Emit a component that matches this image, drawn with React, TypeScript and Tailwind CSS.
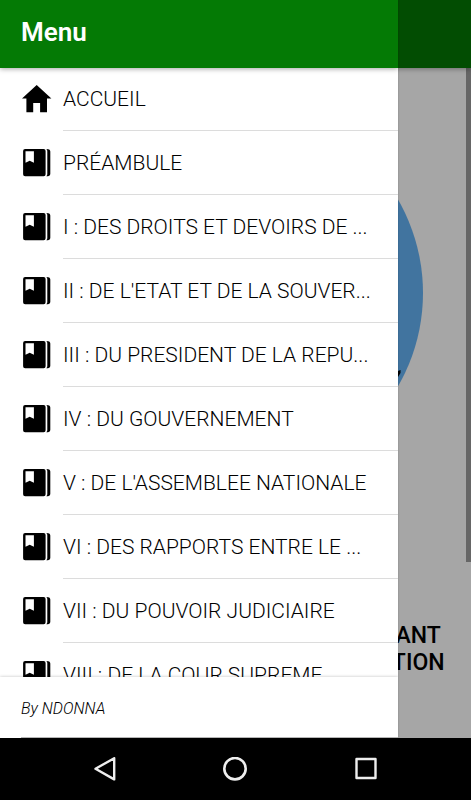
interface MenuItem {
  label: string;
  icon: 'home' | 'book';
}

const MENU_ITEMS: MenuItem[] = [
  { label: 'ACCUEIL', icon: 'home' },
  { label: 'PRÉAMBULE', icon: 'book' },
  { label: 'I : DES DROITS ET DEVOIRS DE ...', icon: 'book' },
  { label: "II : DE L'ETAT ET DE LA SOUVER...", icon: 'book' },
  { label: 'III : DU PRESIDENT DE LA REPU...', icon: 'book' },
  { label: 'IV : DU GOUVERNEMENT', icon: 'book' },
  { label: "V : DE L'ASSEMBLEE NATIONALE", icon: 'book' },
  { label: 'VI : DES RAPPORTS ENTRE LE ...', icon: 'book' },
  { label: 'VII : DU POUVOIR JUDICIAIRE', icon: 'book' },
  { label: 'VIII : DE LA COUR SUPREME', icon: 'book' },
];

function HomeIcon() {
  return (
    <svg className="w-[30px] h-[30px] shrink-0" viewBox="0 0 30 30" fill="currentColor" aria-hidden="true">
      <path d="M11.2 28.3V19h6.9v9.3H25V14.6h4.4L14.7 1 0 14.6h4.4v13.7z" />
    </svg>
  );
}

function BookIcon() {
  return (
    <svg className="w-[30px] h-[30px] shrink-0" viewBox="0 0 30 30" fill="currentColor" aria-hidden="true">
      <path
        fillRule="evenodd"
        d="M3.1 1h18.5a2 2 0 0 1 2 2v23.3a2 2 0 0 1-2 2H3.1a2 2 0 0 1-2-2V3a2 2 0 0 1 2-2zM3.5 3.3v11.5l4.2-2 4.2 2V3.3z"
      />
      <path d="M24.3 1c2.6 0 4 .8 4 2.6v22.1c0 1.800-1.400 2.600-4 2.600.7-.6 1-1.200 1-2V3c0-.8-.3-1.400-1-2z" />
    </svg>
  );
}

function MenuRow({ item }: { item: MenuItem }) {
  return (
    <li>
      <a href="#" className="flex items-center h-16 pl-[22px] gap-[11px]">
        {item.icon === 'home' ? <HomeIcon /> : <BookIcon />}
        <span className="flex-1 min-w-0 h-full flex items-center border-b border-[#dcdcdc] pt-0.5 text-[21px] font-[350] whitespace-nowrap">
          {item.label}
        </span>
      </a>
    </li>
  );
}

function Drawer() {
  return (
    <aside className="absolute inset-y-0 left-0 w-[84.5%] flex flex-col overflow-hidden bg-white shadow-[0_0_2px_rgba(0,0,0,0.2)]">
      <header className="relative z-10 h-17 shrink-0 flex items-center pl-[21px] pb-1 bg-[#047a05] shadow-[0_1px_5px_rgba(0,0,0,0.35)]">
        <h2 className="text-[26px] font-semibold text-white">Menu</h2>
      </header>
      <nav className="flex-1 min-h-0 overflow-hidden">
        <ul className="-mt-px">
          {MENU_ITEMS.map((item) => (
            <MenuRow key={item.label} item={item} />
          ))}
        </ul>
      </nav>
      <footer className="relative h-[61px] shrink-0 pl-[21px] bg-white shadow-[0_0_3px_rgba(0,0,0,0.25)]">
        <p className="h-full flex items-center pt-1 border-b border-[#b5b5b5] text-base font-[350] italic">By NDONNA</p>
      </footer>
    </aside>
  );
}

// Home page, dimmed while the drawer is open
function Page() {
  return (
    <main className="relative z-0 flex-1 min-h-0 flex flex-col bg-[#a6a6a6]">
      <div className="relative z-10 h-17 shrink-0 bg-[#024d02] shadow-[0_1px_5px_rgba(0,0,0,0.35)]" />
      <div className="flex-1 min-h-0 relative flex flex-col items-center">
        <svg className="mt-[38px] w-[374px] h-[374px]" viewBox="0 0 374 374" aria-hidden="true">
          <circle cx="187" cy="187" r="187" fill="#41749f" />
          <path d="M349 265l2.500-1v3l-2.500 4z" fill="#000" />
        </svg>
        <p className="self-start w-fit mt-[142px] ml-[83.2%] text-center text-[23px] leading-[27px] font-medium">
          ANT
          <br />
          TION
        </p>
        <div className="absolute top-0 right-0 w-[5px] h-[73.7%] bg-[#666]" />
      </div>
    </main>
  );
}

function SystemBar() {
  return (
    <div className="h-[62px] shrink-0 grid grid-cols-3 items-center justify-items-center px-10 bg-black text-[#eee]">
      <button type="button" aria-label="Back">
        <svg className="w-6 h-6" viewBox="0 0 24 24" fill="none" stroke="currentColor" strokeWidth="2.4" strokeLinejoin="round">
          <path d="M21.2 1.2v21.2L2.500 11.800z" />
        </svg>
      </button>
      <button type="button" aria-label="Home">
        <svg className="w-6 h-6" viewBox="0 0 24 24" fill="none" stroke="currentColor" strokeWidth="2.6">
          <circle cx="12" cy="11.7" r="10.7" />
        </svg>
      </button>
      <button type="button" aria-label="Recent apps">
        <svg className="w-6 h-6" viewBox="0 0 24 24" fill="none" stroke="currentColor" strokeWidth="2.4" strokeLinejoin="round">
          <path d="M2.500 2h19v19h-19z" />
        </svg>
      </button>
    </div>
  );
}

export default function App() {
  return (
    <div className="h-screen flex flex-col overflow-hidden font-[Roboto,sans-serif] text-black">
      <div className="relative flex-1 min-h-0 flex flex-col">
        <Page />
        <Drawer />
      </div>
      <SystemBar />
    </div>
  );
}
